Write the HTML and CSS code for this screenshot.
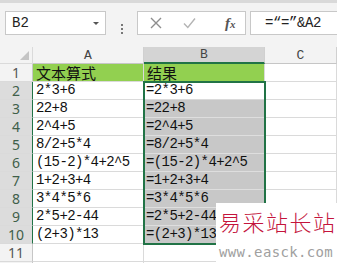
FILE: index.html
```html
<!DOCTYPE html>
<html lang="zh-CN">
<head>
    <meta charset="UTF-8">
    <meta name="viewport" content="width=device-width, initial-scale=1.0">
    <title>文本算式</title>
    <link rel="stylesheet" href="styles.css">
</head>
<body>
    <div class="window">
        <div class="top-strip"></div>

        <div class="formula-bar">
            <div class="name-box">
                <span class="name">B2</span>
                <span class="caret"></span>
            </div>
            <div class="grip"><i></i><i></i><i></i></div>
            <div class="buttons">
                <svg class="btn" width="12" height="12" viewBox="0 0 12 12">
                    <path d="M1 1 L11 11 M11 1 L1 11" stroke="#8e8e8e" stroke-width="1.4" fill="none"/>
                </svg>
                <svg class="btn" width="13" height="12" viewBox="0 0 13 12">
                    <path d="M1 6.5 L4.8 10.5 L12 1.5" stroke="#b4b4b4" stroke-width="1.4" fill="none"/>
                </svg>
                <span class="fx">f<small>x</small></span>
            </div>
            <div class="formula-input">=“=”&amp;A2</div>
        </div>

        <div class="sheet">
            <div class="grid">
                <div class="corner"><span class="tri"></span></div>
                <div class="col-head">A</div>
                <div class="col-head active">B</div>
                <div class="col-head">C</div>

                <div class="row-head">1</div>
                <div class="cell green"><span class="cjk">文本算式</span></div>
                <div class="cell green"><span class="cjk">结果</span></div>
                <div class="cell"></div>

                <div class="row-head active">2</div>
                <div class="cell">2*3+6</div>
                <div class="cell b">=2*3+6</div>
                <div class="cell"></div>

                <div class="row-head active">3</div>
                <div class="cell">22+8</div>
                <div class="cell b sel">=22+8</div>
                <div class="cell"></div>

                <div class="row-head active">4</div>
                <div class="cell">2^4+5</div>
                <div class="cell b sel">=2^4+5</div>
                <div class="cell"></div>

                <div class="row-head active">5</div>
                <div class="cell">8/2+5*4</div>
                <div class="cell b sel">=8/2+5*4</div>
                <div class="cell"></div>

                <div class="row-head active">6</div>
                <div class="cell">(15-2)*4+2^5</div>
                <div class="cell b sel">=(15-2)*4+2^5</div>
                <div class="cell"></div>

                <div class="row-head active">7</div>
                <div class="cell">1+2+3+4</div>
                <div class="cell b sel">=1+2+3+4</div>
                <div class="cell"></div>

                <div class="row-head active">8</div>
                <div class="cell">3*4*5*6</div>
                <div class="cell b sel">=3*4*5*6</div>
                <div class="cell"></div>

                <div class="row-head active">9</div>
                <div class="cell">2*5+2-44</div>
                <div class="cell b sel">=2*5+2-44</div>
                <div class="cell"></div>

                <div class="row-head active">10</div>
                <div class="cell">(2+3)*13</div>
                <div class="cell b sel">=(2+3)*13</div>
                <div class="cell"></div>

                <div class="row-head">11</div>
                <div class="cell"></div>
                <div class="cell"></div>
                <div class="cell"></div>

                <div class="row-head"></div>
                <div class="cell"></div>
                <div class="cell"></div>
                <div class="cell"></div>
            </div>
            <div class="selection"></div>
        </div>

        <div class="watermark">
            <div class="wm-title">易采站长站</div>
            <div class="wm-url">www.easck.com</div>
        </div>
    </div>
</body>
</html>
```

FILE: styles.css
```css
body {
    margin: 0;
    background: #fff;
}

.window {
    position: relative;
    width: 337px;
    height: 263px;
    overflow: hidden;
    background: #f3f3f3;
    font-family: "Liberation Mono", "Noto Sans CJK SC", monospace;
}

.top-strip {
    height: 3px;
    background: #d9d9d9;
}

/* formula bar */
.formula-bar {
    display: flex;
    height: 44px;
    padding-top: 8px;
    box-sizing: border-box;
}
.name-box,
.buttons,
.formula-input {
    height: 24px;
    box-sizing: border-box;
    background: #fff;
    border: 1px solid #c8c8c8;
    display: flex;
    align-items: center;
}
.name-box {
    width: 101px;
    margin-left: 5px;
    padding: 0 6px 0 6px;
    justify-content: space-between;
}
.name {
    font-size: 14px;
    color: #222;
}
.caret {
    width: 0;
    height: 0;
    border-left: 3px solid transparent;
    border-right: 3px solid transparent;
    border-top: 3px solid #555;
}
.grip {
    width: 31px;
    display: flex;
    flex-direction: column;
    align-items: center;
    justify-content: center;
    gap: 2px;
}
.grip i {
    width: 2px;
    height: 2px;
    background: #777;
}
.buttons {
    width: 109px;
    padding-left: 12px;
    gap: 21px;
}
.fx {
    margin-left: 8px;
    font-family: "Liberation Serif", serif;
    font-style: italic;
    font-weight: bold;
    font-size: 15px;
    color: #555;
}
.fx small {
    font-size: 11px;
}
.formula-input {
    flex: 1;
    margin-left: 4px;
    border-right: none;
    padding-left: 14px;
    font-size: 14px;
    letter-spacing: -0.4px;
    color: #222;
}

/* sheet */
.sheet {
    position: relative;
    background: #fff;
}
.grid {
    display: grid;
    grid-template-columns: 33px 111px 121px 72px;
    grid-template-rows: 17px repeat(12, 18px);
}
.grid > div {
    box-sizing: border-box;
    border-right: 1px solid #dadada;
    border-bottom: 1px solid #dadada;
    display: flex;
    align-items: center;
    overflow: hidden;
    white-space: nowrap;
    line-height: 17px;
}
.corner {
    background: #f3f3f3;
    position: relative;
}
.tri {
    position: absolute;
    right: 3px;
    bottom: 3px;
    width: 0;
    height: 0;
    border-left: 9px solid transparent;
    border-bottom: 9px solid #c4c4c4;
}
.grid > .col-head {
    background: #f3f3f3;
    justify-content: center;
    font-size: 13px;
    color: #444;
    border-right-color: #d0d0d0;
    border-bottom-color: #c6c6c6;
}
.grid > .col-head.active {
    background: #d4d4d4;
    border-bottom: 2px solid #217346;
}
.grid > .row-head {
    background: #f3f3f3;
    justify-content: center;
    font-family: "Noto Sans", sans-serif;
    font-size: 14px;
    color: #555;
    border-right-color: #c6c6c6;
}
.grid > .row-head.active {
    background: #dcdcdc;
    color: #3f5f4a;
    border-right-color: #217346;
}
.cell {
    padding-left: 3px;
    font-size: 14px;
    letter-spacing: -0.6px;
    color: #111;
}
.cell.b {
    padding-left: 2px;
}
.grid > .green {
    background: #92d050;
    overflow: visible;
}
.grid > .sel {
    background: #c8c8c8;
    border-bottom-color: #dedede;
}
.cjk {
    font-family: "Noto Sans CJK SC", sans-serif;
    font-size: 15px;
    line-height: 17px;
    letter-spacing: 0;
}

.selection {
    position: absolute;
    left: 143px;
    top: 34px;
    width: 123px;
    height: 164px;
    border: 2px solid #217346;
    box-sizing: border-box;
}

/* watermark */
.watermark {
    position: absolute;
    left: 216px;
    top: 203px;
    right: 0;
    bottom: 0;
    background: #fff;
    padding: 4px 0 0 3px;
}
.wm-title {
    font-family: "Noto Sans CJK SC", sans-serif;
    font-weight: 300;
    font-size: 22px;
    letter-spacing: 1.5px;
    line-height: 28px;
    color: #c4143c;
}
.wm-url {
    margin-top: 9px;
    font-family: "DejaVu Sans Mono", monospace;
    font-size: 14px;
    letter-spacing: 0.35px;
    color: #a0a0a0;
}
```
